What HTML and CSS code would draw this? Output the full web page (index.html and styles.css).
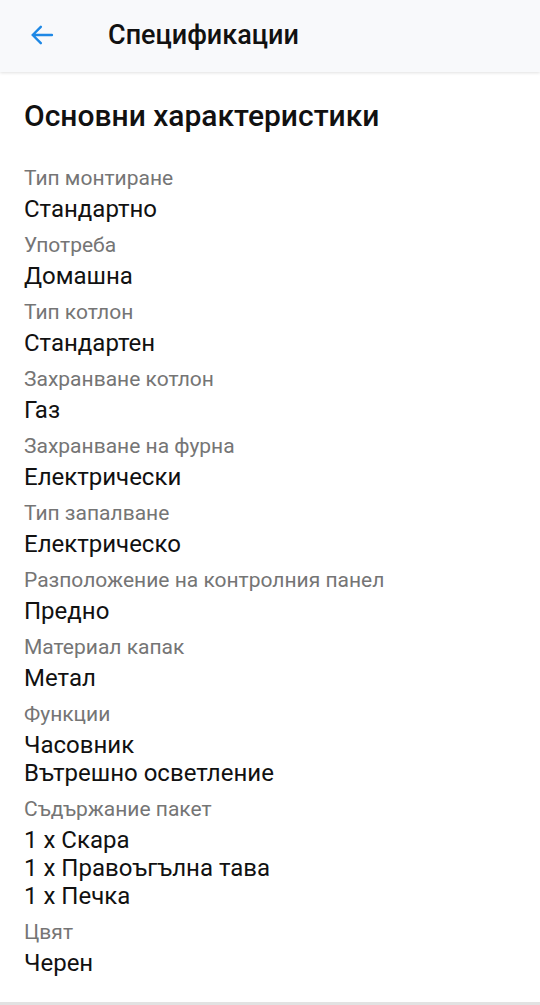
FILE: index.html
```html
<!DOCTYPE html>
<html lang="bg">
<head>
<meta charset="utf-8">
<link rel="stylesheet" href="styles.css">
</head>
<body>
<header class="topbar">
  <svg class="back" width="28" height="28" viewBox="0 0 24 24"><path d="M20.5 12H4M11 5L4 12L11 19" fill="none" stroke="#1e88e5" stroke-width="2.1" stroke-linecap="round" stroke-linejoin="round"/></svg>
  <h1 class="title">Спецификации</h1>
</header>
<main class="content">
  <h2 class="heading">Основни характеристики</h2>
  <dl class="specs">
    <div class="item"><dt>Тип монтиране</dt><dd>Стандартно</dd></div>
    <div class="item"><dt>Употреба</dt><dd>Домашна</dd></div>
    <div class="item"><dt>Тип котлон</dt><dd>Стандартен</dd></div>
    <div class="item"><dt>Захранване котлон</dt><dd>Газ</dd></div>
    <div class="item"><dt>Захранване на фурна</dt><dd>Електрически</dd></div>
    <div class="item"><dt>Тип запалване</dt><dd>Електрическо</dd></div>
    <div class="item"><dt>Разположение на контролния панел</dt><dd>Предно</dd></div>
    <div class="item"><dt>Материал капак</dt><dd>Метал</dd></div>
    <div class="item"><dt>Функции</dt><dd>Часовник</dd><dd>Вътрешно осветление</dd></div>
    <div class="item"><dt>Съдържание пакет</dt><dd>1 х Скара</dd><dd>1 х Правоъгълна тава</dd><dd>1 х Печка</dd></div>
    <div class="item"><dt>Цвят</dt><dd>Черен</dd></div>
  </dl>
</main>
<div class="bottomline"></div>
</body>
</html>
```
FILE: styles.css
```css
* { box-sizing: border-box; }
html, body { margin: 0; padding: 0; }
body {
  width: 540px;
  height: 1005px;
  background: #ffffff;
  font-family: Roboto, "Noto Sans", sans-serif;
  color: #000;
  display: flex;
  flex-direction: column;
  overflow: hidden;
}
.topbar {
  height: 72px;
  background: #f8f9fb;
  display: flex;
  align-items: center;
  padding-left: 28px;
  box-shadow: 0 1px 3px rgba(0,0,0,0.12);
  position: relative;
  z-index: 1;
  flex-shrink: 0;
}
.back { display: block; margin-top: -2px; }
.title {
  margin: -2px 0 0 52px;
  font-size: 27px;
  font-weight: 500;
  color: #111;
  line-height: 1;
}
.content {
  flex: 1;
  padding: 28px 24px 0 24px;
}
.heading {
  margin: 0;
  font-size: 30px;
  font-weight: 500;
  line-height: 32px;
  color: #111;
}
.specs {
  margin: 34px 0 0 0;
  display: flex;
  flex-direction: column;
  gap: 10px;
}
.item { display: flex; flex-direction: column; }
dt {
  font-size: 21px;
  line-height: 24px;
  color: #757575;
  margin-bottom: 5px;
}
dd {
  margin: 0;
  font-size: 24px;
  line-height: 28px;
  color: #111;
}
.bottomline {
  height: 3px;
  background: #e2e2e2;
  flex-shrink: 0;
}
```
